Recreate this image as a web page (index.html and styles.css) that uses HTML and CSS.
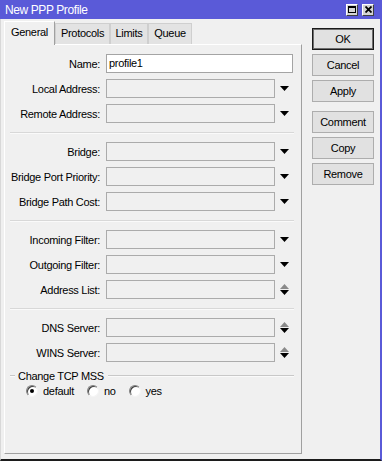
FILE: index.html
```html
<!DOCTYPE html>
<html lang="en">
<head>
  <meta charset="UTF-8" />
  <title>New PPP Profile</title>
  <link rel="stylesheet" href="styles.css">
</head>
<body>
  <div class="window">
    <div class="titlebar">
      <span class="title">New PPP Profile</span>
      <div class="title-btns">
        <span class="tbtn"><span class="max-icon"></span></span>
        <span class="tbtn close">
          <svg width="7" height="7" viewBox="0 0 7 7"><path d="M0.5 0.5L6.5 6.5M6.5 0.5L0.5 6.5" stroke="#000" stroke-width="1.8"/></svg>
        </span>
      </div>
    </div>

    <div class="frame">
      <div class="left">
        <div class="tabs">
          <div class="tab active w-general">General</div>
          <div class="tab w-protocols">Protocols</div>
          <div class="tab w-limits">Limits</div>
          <div class="tab w-queue">Queue</div>
        </div>

        <div class="panel">
          <div class="row"><label>Name:</label><div class="field wide">profile1</div></div>
          <div class="row"><label>Local Address:</label><div class="field"></div><span class="arrow"><svg width="9" height="5"><path d="M0 0h9L4.5 5z"/></svg></span></div>
          <div class="row last"><label>Remote Address:</label><div class="field"></div><span class="arrow"><svg width="9" height="5"><path d="M0 0h9L4.5 5z"/></svg></span></div>

          <div class="sep"></div>

          <div class="row"><label>Bridge:</label><div class="field"></div><span class="arrow"><svg width="9" height="5"><path d="M0 0h9L4.5 5z"/></svg></span></div>
          <div class="row"><label>Bridge Port Priority:</label><div class="field"></div><span class="arrow"><svg width="9" height="5"><path d="M0 0h9L4.5 5z"/></svg></span></div>
          <div class="row last"><label>Bridge Path Cost:</label><div class="field"></div><span class="arrow"><svg width="9" height="5"><path d="M0 0h9L4.5 5z"/></svg></span></div>

          <div class="sep"></div>

          <div class="row"><label>Incoming Filter:</label><div class="field"></div><span class="arrow"><svg width="9" height="5"><path d="M0 0h9L4.5 5z"/></svg></span></div>
          <div class="row"><label>Outgoing Filter:</label><div class="field"></div><span class="arrow"><svg width="9" height="5"><path d="M0 0h9L4.5 5z"/></svg></span></div>
          <div class="row last"><label>Address List:</label><div class="field"></div><span class="arrow"><svg width="9" height="11"><path d="M4.5 0L9 5H0z" fill="#8a8a8a"/><path d="M0 6h9L4.5 11z"/></svg></span></div>

          <div class="sep"></div>

          <div class="row"><label>DNS Server:</label><div class="field"></div><span class="arrow"><svg width="9" height="11"><path d="M4.5 0L9 5H0z" fill="#8a8a8a"/><path d="M0 6h9L4.5 11z"/></svg></span></div>
          <div class="row last"><label>WINS Server:</label><div class="field"></div><span class="arrow"><svg width="9" height="11"><path d="M4.5 0L9 5H0z" fill="#8a8a8a"/><path d="M0 6h9L4.5 11z"/></svg></span></div>

          <div class="groupbox">
            <span class="gline short"></span>
            <span class="gtitle">Change TCP MSS</span>
            <span class="gline"></span>
          </div>
          <div class="radios">
            <span class="radio checked"></span><span class="rlabel">default</span>
            <span class="radio"></span><span class="rlabel">no</span>
            <span class="radio"></span><span class="rlabel">yes</span>
          </div>
        </div>
      </div>

      <div class="actions">
        <button class="btn default">OK</button>
        <button class="btn">Cancel</button>
        <button class="btn spaced">Apply</button>
        <button class="btn">Comment</button>
        <button class="btn">Copy</button>
        <button class="btn">Remove</button>
      </div>
    </div>
  </div>
</body>
</html>
```

FILE: styles.css
```css
* {
  box-sizing: border-box;
}

body {
  margin: 0;
  font-family: "Liberation Sans", Arial, sans-serif;
  font-size: 11px;
  letter-spacing: -0.3px;
  color: #000;
  background: #f0f0f0;
}

.window {
  width: 382px;
  height: 461px;
  background: #f0f0f0;
}

/* title bar */
.titlebar {
  height: 19px;
  background: #5a5ad8;
  color: #fff;
  display: flex;
  align-items: center;
  padding-left: 5px;
}

.title {
  flex: 1;
  font-size: 12px;
  letter-spacing: -0.4px;
}

.title-btns {
  display: flex;
  gap: 4px;
  margin-right: 8px;
}

.tbtn {
  width: 12px;
  height: 12px;
  background: #d4d4d4;
  border: 1px solid;
  border-color: #fff #404040 #404040 #fff;
  display: flex;
  align-items: center;
  justify-content: center;
}

.max-icon {
  width: 8px;
  height: 7px;
  border: 1px solid #000;
  border-top-width: 2px;
}

/* frame */
.frame {
  height: 442px;
  display: flex;
  gap: 10px;
  padding: 2px 6px 0 3px;
  border-left: 1px solid #d8d8d8;
  border-right: 2px solid #5a5ad8;
  border-bottom: 2px solid #1c1c1c;
}

.left {
  width: 298px;
  display: flex;
  flex-direction: column;
}

/* tabs */
.tabs {
  display: flex;
  align-items: flex-end;
  height: 23px;
}

.tab {
  height: 21px;
  line-height: 19px;
  text-align: center;
  background: #e3e3e3;
  border: 1px solid #cfcfcf;
  border-bottom: none;
}

.tab.active {
  height: 24px;
  line-height: 21px;
  background: #f0f0f0;
  border-color: #fff #a0a0a0 #f0f0f0 #fff;
  position: relative;
  z-index: 1;
  margin-bottom: -1px;
}

.w-general { width: 51px; }
.w-protocols { width: 55px; }
.w-limits { width: 38px; }
.w-queue { width: 44px; }

.panel {
  height: 410px;
  border: 1px solid;
  border-color: #fff #a0a0a0 #a0a0a0 #fff;
  padding-top: 9px;
}

/* field rows */
.row {
  display: flex;
  align-items: center;
  height: 19px;
  margin-bottom: 6px;
}

.row.last {
  margin-bottom: 0;
}

.row label {
  width: 95px;
  text-align: right;
  margin-right: 6px;
  white-space: nowrap;
}

.field {
  width: 169px;
  height: 19px;
  border: 1px solid #ababab;
  background: #f0f0f0;
  line-height: 17px;
  padding-left: 2px;
}

.field.wide {
  width: 187px;
  background: #fff;
  border-color: #a4a4a4;
}

.arrow {
  width: 18px;
  height: 19px;
  display: flex;
  align-items: center;
  justify-content: center;
}

.arrow svg {
  display: block;
}

.sep {
  margin: 9px 7px 8px 5px;
  border-top: 1px solid #d8d8d8;
  border-bottom: 1px solid #fafafa;
}

/* group box */
.groupbox {
  display: flex;
  align-items: center;
  height: 12px;
  margin-top: 8px;
  margin-left: 5px;
  margin-right: 7px;
}

.gline {
  flex: 1;
  border-top: 1px solid #c8c8c8;
  border-bottom: 1px solid #fafafa;
}

.gline.short {
  flex: none;
  width: 5px;
}

.gtitle {
  padding: 0 4px 0 3px;
}

.radios {
  display: flex;
  align-items: center;
  height: 16px;
  margin-top: 1px;
  padding-left: 21px;
}

.radio {
  width: 12px;
  height: 12px;
  border-radius: 50%;
  background: #fff;
  border: 1px solid;
  border-color: #808080 #f4f4f4 #f4f4f4 #808080;
  box-shadow: inset 1px 1px 0 #404040;
  display: flex;
  align-items: center;
  justify-content: center;
  margin-right: 5px;
}

.radio.checked::after {
  content: "";
  width: 4px;
  height: 4px;
  border-radius: 50%;
  background: #000;
}

.rlabel {
  margin-right: 13px;
}

/* side buttons */
.actions {
  width: 62px;
  display: flex;
  flex-direction: column;
  padding-top: 7px;
}

.btn {
  width: 62px;
  height: 22px;
  margin-bottom: 4px;
  background: #e1e1e1;
  border: 1px solid #adadad;
  font-family: "Liberation Sans", Arial, sans-serif;
  font-size: 11px;
  letter-spacing: -0.3px;
  color: #000;
  padding: 0;
}

.btn.default {
  border-color: #1a1a1a;
  box-shadow: inset 0 0 0 1px #6e6e6e;
}

.btn.spaced {
  margin-bottom: 9px;
}
```
